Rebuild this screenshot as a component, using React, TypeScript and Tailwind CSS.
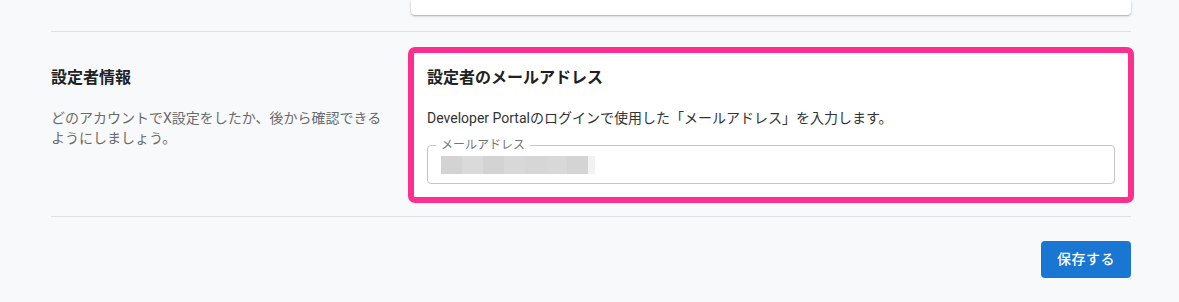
import React from "react";

const blocks = ["#d3d3d3", "#dadada", "#d3d3d3", "#d8d8d8", "#d6d6d6", "#d8d8d8", "#d4d4d4"];

export default function App() {
  return (
    <div
      className="min-h-[302px] w-full bg-[#f8f9fa] text-[#212121]"
      style={{ fontFamily: 'Roboto, "Noto Sans CJK JP", sans-serif' }}
    >
      <div className="ml-[51px] w-[1080px]">
        {/* previous section tail */}
        <div className="grid grid-cols-[360px_720px]">
          <div />
          <div className="h-[15px] rounded-b-[4px] bg-white shadow-[0_1px_3px_rgba(0,0,0,0.2),0_1px_1px_rgba(0,0,0,0.14)]" />
        </div>
        <div className="mt-4 h-px bg-[#e0e0e0]" />

        {/* section */}
        <div className="grid grid-cols-[360px_720px] pt-[18px] pb-4">
          <div className="pt-4 pr-4">
            <h2 className="text-[16px] leading-6 font-bold text-[#212121]">設定者情報</h2>
            <p className="mt-[18px] text-[14px] leading-5 text-[#6b6b6b]">
              どのアカウントでX設定をしたか、後から確認できるようにしましょう。
            </p>
          </div>
          <div className="rounded-[4px] bg-white px-4 pt-4 pb-[16px] outline-[6px] outline-solid outline-[#fc2f8e] -outline-offset-3">
            <h3 className="text-[16px] leading-6 font-bold text-[#212121]">設定者のメールアドレス</h3>
            <p className="mt-[18px] text-[14px] leading-5 text-[#333333]">
              Developer Portalのログインで使用した「メールアドレス」を入力します。
            </p>
            <fieldset className="mt-[11px] h-[45px] rounded-[4px] border border-[#c4c4c4] px-[8px]">
              <legend className="px-[5px] text-[12px] leading-[12px] text-[#757575]">メールアドレス</legend>
              <div className="mt-[5px] ml-[5px] flex h-[18px]">
                {blocks.map((c, i) => (
                  <div key={i} className="h-full w-[21px]" style={{ backgroundColor: c }} />
                ))}
                <div className="h-full w-[7px] bg-[#f2f2f2]" />
              </div>
            </fieldset>
          </div>
        </div>
        <div className="h-px bg-[#e0e0e0]" />

        <div className="mt-6 flex justify-end">
          <button className="h-[37px] w-[90px] rounded-[4px] bg-[#1976d2] text-[14px] font-medium tracking-[0.5px] text-white">
            保存する
          </button>
        </div>
      </div>
    </div>
  );
}
